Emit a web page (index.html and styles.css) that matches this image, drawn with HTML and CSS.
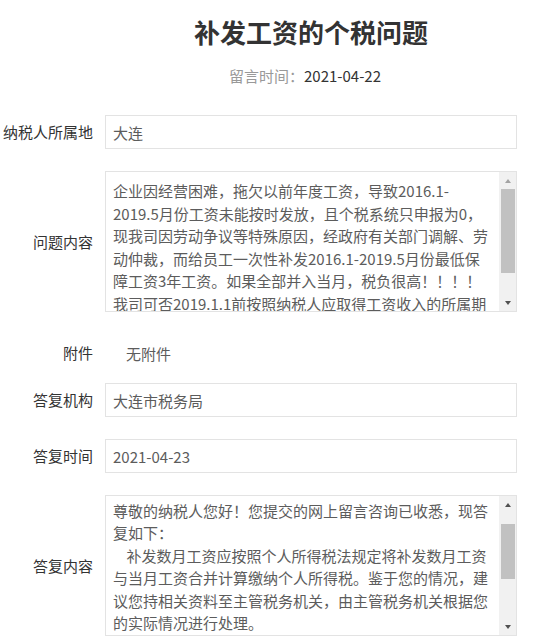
FILE: index.html
```html
<!DOCTYPE html>
<html>
<head>
  <meta charset="utf-8">
  <link rel="stylesheet" href="styles.css">
</head>
<body>
  <div class="header">
    <h1 class="title">补发工资的个税问题</h1>
    <p class="meta"><span class="meta-label">留言时间：</span>2021-04-22</p>
  </div>

  <div class="form">
    <div class="row">
      <label class="label">纳税人所属地</label>
      <input class="field" type="text" value="大连" readonly>
    </div>
    <div class="row">
      <label class="label">问题内容</label>
      <div class="field area-box" data-scroll="0" data-dim="1">
        <textarea class="area" readonly>企业因经营困难，拖欠以前年度工资，导致2016.1-2019.5月份工资未能按时发放，且个税系统只申报为0，现我司因劳动争议等特殊原因，经政府有关部门调解、劳动仲裁，而给员工一次性补发2016.1-2019.5月份最低保障工资3年工资。如果全部并入当月，税负很高！！！！我司可否2019.1.1前按照纳税人应取得工资收入的所属期间分别计算个人所得税吗？</textarea>
        <div class="scrollbar">
          <span class="sb-btn sb-up"></span>
          <div class="sb-track"><div class="sb-thumb"></div></div>
          <span class="sb-btn sb-down"></span>
        </div>
      </div>
    </div>
    <div class="row attach">
      <span class="label">附件</span>
      <span class="attach-value">无附件</span>
    </div>
    <div class="row">
      <label class="label">答复机构</label>
      <input class="field" type="text" value="大连市税务局" readonly>
    </div>
    <div class="row">
      <label class="label">答复时间</label>
      <input class="field" type="text" value="2021-04-23" readonly>
    </div>
    <div class="row">
      <label class="label">答复内容</label>
      <div class="field area-box" data-scroll="27">
        <textarea class="area" readonly>

尊敬的纳税人您好！您提交的网上留言咨询已收悉，现答复如下：
    补发数月工资应按照个人所得税法规定将补发数月工资与当月工资合并计算缴纳个人所得税。鉴于您的情况，建议您持相关资料至主管税务机关，由主管税务机关根据您的实际情况进行处理。
    上述回复仅供参考。有关具体办理程序请您与主管税务机关联系。
    欢迎您再次提问，感谢您对我们工作的支持和信任，祝您工作顺利！</textarea>
        <div class="scrollbar">
          <span class="sb-btn sb-up"></span>
          <div class="sb-track"><div class="sb-thumb"></div></div>
          <span class="sb-btn sb-down"></span>
        </div>
      </div>
    </div>
  </div>

  <script src="script.js"></script>
</body>
</html>
```

FILE: styles.css
```css
body {
  margin: 0;
  padding: 0;
  font-family: "Noto Sans CJK SC", "Liberation Sans", sans-serif;
  color: #333;
  background: #fff;
}

.header {
  margin-left: 105px;
  width: 412px;
  text-align: center;
}

.title {
  margin: 14px 0 0;
  font-size: 26px;
  line-height: 36px;
  font-weight: bold;
  color: #333;
}

.meta {
  margin: 15px 0 0;
  padding-right: 12px;
  font-size: 15px;
  line-height: 22px;
  color: #333;
}

.meta-label {
  color: #999;
}

.form {
  width: 517px;
  margin-top: 28px;
}

.row {
  display: flex;
  align-items: center;
  margin-bottom: 22px;
}

.label {
  width: 93px;
  flex-shrink: 0;
  margin-right: 12px;
  text-align: right;
  font-size: 15px;
  line-height: 22px;
  color: #333;
}

.field {
  flex: 1;
  box-sizing: border-box;
  height: 34px;
  margin: 0;
  padding: 0 8px 0 7px;
  border: 1px solid #e3e3e3;
  border-radius: 0;
  outline: none;
  background: #fff;
  font-family: "Noto Sans CJK SC", "Liberation Sans", sans-serif;
  font-size: 15px;
  color: #5c5c5c;
}

.attach {
  height: 38px;
  margin-bottom: 11px;
}

.attach-value {
  padding-left: 21px;
  font-size: 15px;
  color: #5c5c5c;
}

/* textarea + hand drawn scrollbar (real ones are hidden in the shot) */
.area-box {
  display: flex;
  height: 141px;
  padding: 0;
}

.area {
  flex: 1;
  min-width: 0;
  box-sizing: border-box;
  height: 100%;
  margin: 0;
  padding: 8px 10px 8px 7px;
  border: none;
  outline: none;
  resize: none;
  overflow: hidden;
  font-family: "Noto Sans CJK SC", "Liberation Sans", sans-serif;
  font-size: 15px;
  line-height: 22.5px;
  color: #5c5c5c;
  background: #fff;
}

.scrollbar {
  width: 17px;
  display: flex;
  flex-direction: column;
  background: #f1f1f1;
}

.sb-btn {
  height: 17px;
  display: flex;
  align-items: center;
  justify-content: center;
}

.sb-btn::before {
  content: "";
  border-left: 3.5px solid transparent;
  border-right: 3.5px solid transparent;
}

.sb-up::before {
  border-bottom: 4px solid #505050;
}

.sb-down::before {
  border-top: 4px solid #505050;
}

.area-box[data-dim] .sb-up::before {
  border-bottom-color: #a3a3a3;
}

.sb-track {
  flex: 1;
}

.sb-thumb {
  margin-left: 2px;
  margin-right: 1px;
  background: #c1c1c1;
}
```

FILE: script.js
```js
// sync the drawn scrollbar with the textarea
document.querySelectorAll('.area-box').forEach(function (box) {
  var area = box.querySelector('.area');
  var track = box.querySelector('.sb-track');
  var thumb = box.querySelector('.sb-thumb');

  area.scrollTop = parseInt(box.dataset.scroll, 10) || 0;

  var trackH = track.clientHeight;
  var thumbH = Math.round(trackH * area.clientHeight / area.scrollHeight);
  var room = area.scrollHeight - area.clientHeight;
  var top = room > 0 ? Math.round(area.scrollTop * (trackH - thumbH) / room) : 0;

  thumb.style.height = thumbH + 'px';
  thumb.style.marginTop = top + 'px';
});
```
